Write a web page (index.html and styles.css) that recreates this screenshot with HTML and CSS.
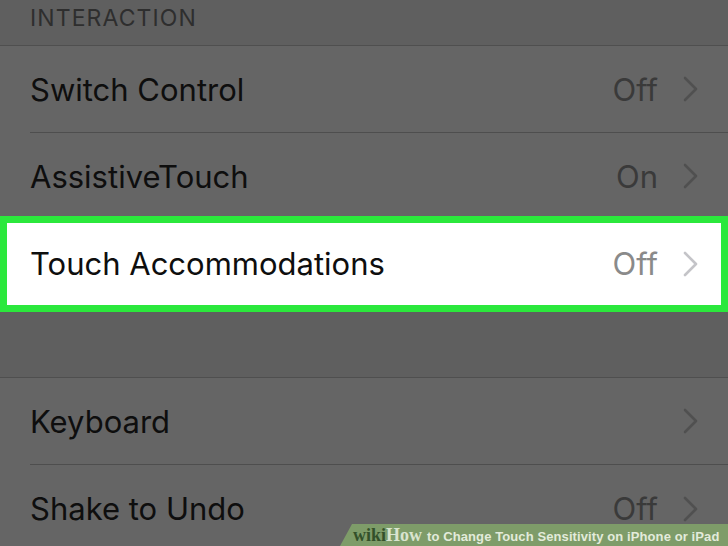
FILE: index.html
```html
<!DOCTYPE html>
<html>
<head>
<meta charset="utf-8">
<link rel="stylesheet" href="styles.css">
</head>
<body>
<div class="screen">
  <div class="section-header">INTERACTION</div>
  <div class="group">
    <div class="row">
      <div class="row-inner">
        <span class="label">Switch Control</span>
        <span class="value">Off</span>
        <svg class="chev" viewBox="0 0 15 26" width="15" height="26"><polyline points="2,2 13,13 2,24"/></svg>
      </div>
    </div>
    <div class="row">
      <div class="row-inner">
        <span class="label">AssistiveTouch</span>
        <span class="value">On</span>
        <svg class="chev" viewBox="0 0 15 26" width="15" height="26"><polyline points="2,2 13,13 2,24"/></svg>
      </div>
    </div>
    <div class="row row-hl">
      <div class="row-inner">
        <span class="label">Touch Accommodations</span>
        <span class="value">Off</span>
        <svg class="chev" viewBox="0 0 15 26" width="15" height="26"><polyline points="2,2 13,13 2,24"/></svg>
      </div>
    </div>
  </div>
  <div class="spacer"></div>
  <div class="group group-top">
    <div class="row">
      <div class="row-inner">
        <span class="label">Keyboard</span>
        <svg class="chev" viewBox="0 0 15 26" width="15" height="26"><polyline points="2,2 13,13 2,24"/></svg>
      </div>
    </div>
    <div class="row">
      <div class="row-inner">
        <span class="label">Shake to Undo</span>
        <span class="value">Off</span>
        <svg class="chev" viewBox="0 0 15 26" width="15" height="26"><polyline points="2,2 13,13 2,24"/></svg>
      </div>
    </div>
  </div>
  <div class="wm"><span class="wm-wiki">wiki</span><span class="wm-how">How</span><span class="wm-rest">to Change Touch Sensitivity on iPhone or iPad</span></div>
</div>
</body>
</html>
```
FILE: styles.css
```css
html, body {
  margin: 0;
  padding: 0;
}
body {
  background: #5f5f5f;
  font-family: "Inter", "Liberation Sans", sans-serif;
}
.screen {
  position: relative;
  width: 728px;
  height: 546px;
  overflow: hidden;
  background: #5f5f5f;
}
.section-header {
  height: 46px;
  box-sizing: border-box;
  padding: 5px 0 0 30px;
  font-size: 23px;
  line-height: 27px;
  letter-spacing: 1.1px;
  color: #2e2e2e;
  border-bottom: 1px solid #4f4f4f;
}
.group {
  background: #656565;
}
.group-top {
  border-top: 1px solid #4f4f4f;
}
.row {
  position: relative;
  height: 87px;
  padding-left: 30px;
}
.row-inner {
  height: 100%;
  box-sizing: border-box;
  display: flex;
  align-items: center;
  padding-right: 30px;
  border-bottom: 1px solid #4e4e4e;
}
.row:last-child .row-inner {
  border-bottom: none;
}
.label {
  flex: 1;
  font-size: 31px;
  color: #0e0e0e;
}
.value {
  font-size: 31px;
  color: #3a3a3a;
  margin-right: 25px;
}
.chev {
  display: block;
  fill: none;
  stroke: #505050;
  stroke-width: 2.6;
  stroke-linecap: round;
  stroke-linejoin: round;
}
.row-hl {
  background: #ffffff;
}
.row-hl .row-inner {
  position: relative;
  z-index: 2;
}
.row-hl::after {
  content: "";
  position: absolute;
  left: 0;
  right: 0;
  top: -4px;
  bottom: -5px;
  border: 7px solid #2be83c;
  z-index: 1;
}
.row-hl .value {
  color: #8a8a8a;
}
.row-hl .chev {
  stroke: #c4c4c8;
}
.spacer {
  height: 70px;
}
.wm {
  position: absolute;
  left: 340px;
  right: 0;
  bottom: 0;
  height: 22px;
  background: #7e9c69;
  clip-path: polygon(12px 0, 100% 0, 100% 100%, 0 100%);
  padding-left: 13px;
  box-sizing: border-box;
  line-height: 23px;
  white-space: nowrap;
  display: flex;
  align-items: baseline;
}
.wm-wiki {
  font-family: "Liberation Serif", serif;
  font-weight: bold;
  color: #33502a;
  font-size: 18px;
}
.wm-how {
  font-family: "Liberation Serif", serif;
  font-weight: bold;
  color: #d9e4cf;
  font-size: 18px;
  margin-right: 5px;
}
.wm-rest {
  font-family: "Liberation Sans", sans-serif;
  font-weight: bold;
  font-size: 13px;
  letter-spacing: 0.1px;
  color: #e3ebdb;
}
```
